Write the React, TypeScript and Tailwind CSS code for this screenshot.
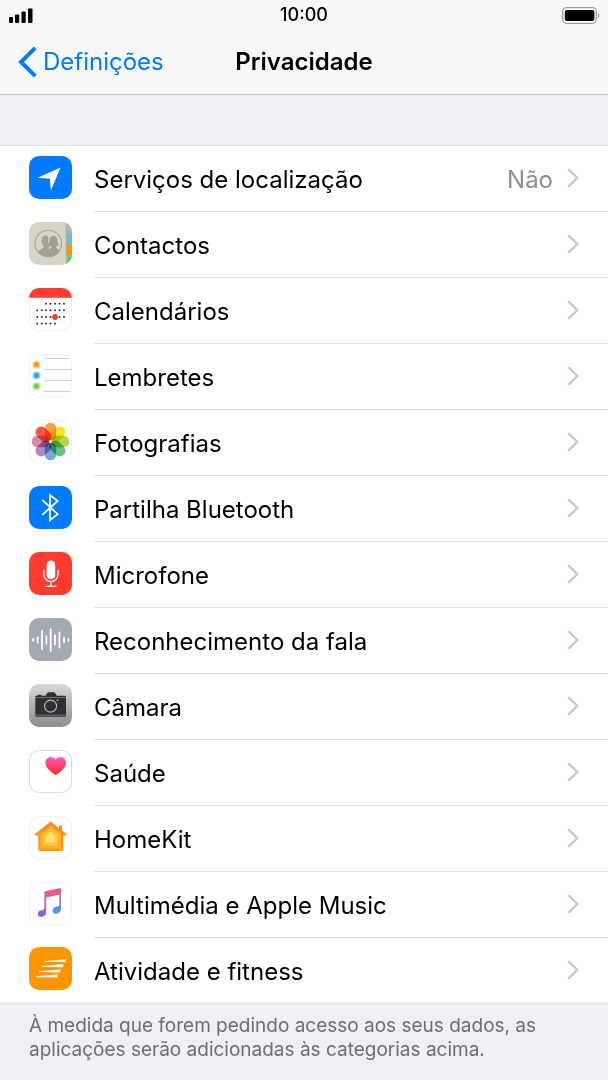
import type { ReactNode } from "react";

interface Setting {
  id: string;
  label: string;
  value?: string;
  icon: ReactNode;
}

interface TileProps {
  className: string;
  children: ReactNode;
}

function Tile({ className, children }: TileProps) {
  return (
    <svg
      viewBox="0 0 43 43"
      aria-hidden="true"
      className={`mb-1 h-[43px] w-[43px] shrink-0 rounded-[10px] ${className}`}
    >
      {children}
    </svg>
  );
}

const outline = "bg-white ring-1 ring-inset ring-[#f0f0f0]";

const calendarRows = [
  { y: 15.7, xs: [17, 21.5, 26, 30.5, 35] },
  { y: 22.3, xs: [8.3, 12.7, 17, 21.5, 26, 30.5, 35] },
  { y: 29, xs: [8.3, 12.7, 17, 21.5, 26, 30.5, 35] },
  { y: 35.6, xs: [8.3, 12.7, 17, 21.5, 26] },
];

const reminderDots = [
  { y: 10.7, color: "#f59a1f" },
  { y: 21.4, color: "#2aa5ea" },
  { y: 32.2, color: "#62d345" },
];

const petals = [
  "#f9a13a",
  "#f3e61c",
  "#b5d655",
  "#6bbf8b",
  "#7ba9dc",
  "#a58cc6",
  "#dc89a8",
  "#f4564a",
];

const waveBars = [
  [4, 20.8, 22.8],
  [8.6, 19.3, 24.6],
  [13, 12.8, 31.2],
  [17.4, 18.2, 25.8],
  [21.7, 11.2, 33],
  [26, 17.2, 26.6],
  [30.4, 14.4, 29.6],
  [35, 19.7, 24.3],
  [39.4, 20.8, 22.8],
];

const settings: Setting[] = [
  {
    id: "localizacao",
    label: "Serviços de localização",
    value: "Não",
    icon: (
      <Tile className="bg-[#007aff]">
        <path d="M31.600 11.500 21.800 34.600 20.900 22.700 8.700 21.800Z" fill="#fff" />
      </Tile>
    ),
  },
  {
    id: "contactos",
    label: "Contactos",
    icon: (
      <Tile className="bg-[#d7d5ca]">
        <path d="M37 0H43V11H37Z" fill="#b7b4ab" />
        <path d="M37.600 11H43V22H37.600Z" fill="#5fc0f0" />
        <path d="M37.600 22H43V33H37.600Z" fill="#ff9500" />
        <path d="M37.600 33H43V43H37.600Z" fill="#53d769" />
        <path d="M37.200 0V43" stroke="#aaa79d" strokeWidth="0.9" />
        <path
          d="M9 30c1-2 4-3 5.500-4.200.4-1 0-2-.9-3.200-1.200-2-2.200-8.200 2.500-9 2-.2 3.200.6 3.700 2-1.200 3-.6 5.600.6 7.200-.5 1.400-.6 2.400 0 3.200L17 34.300C14 34 11 32.500 9 30Z"
          fill="#a8a198"
        />
        <path
          d="M16.500 33.800c.5-4 3.500-6.500 5.800-7.800l-.4-1.800c-1-.2-1.800-.6-2.200-1.200 1.400-1.800-.6-8.500 4.400-9.200 5.200-.3 4 6.800 5.700 9.300-.6.8-1.600 1-2.500 1.200l-.1 1.700c1.400.8 2.700 1.500 3.200 3.200-2.500 4-8.500 6.700-13.900 4.600Z"
          fill="#a49d94"
        />
        <circle cx="19.300" cy="21.500" r="13.300" fill="none" stroke="#a8a198" strokeWidth="1.100" />
      </Tile>
    ),
  },
  {
    id: "calendarios",
    label: "Calendários",
    icon: (
      <Tile className={outline}>
        <path d="M0 0H43V9.700H0Z" fill="#ff3b30" />
        {calendarRows.map((row) =>
          row.xs.map((x) => (
            <rect key={`${row.y}-${x}`} x={x - 0.8} y={row.y - 0.8} width="1.600" height="1.600" fill="#111" />
          ))
        )}
        <circle cx="26" cy="29" r="2.900" fill="#ff3b30" />
      </Tile>
    ),
  },
  {
    id: "lembretes",
    label: "Lembretes",
    icon: (
      <Tile className={outline}>
        <path d="M14.500 4.500H41M14.500 15.500H43M14.500 26.500H43M14.500 37.500H41" stroke="#cfcfd3" />
        {reminderDots.map((dot) => (
          <g key={dot.color}>
            <circle cx="7.400" cy={dot.y} r="3.600" fill="none" stroke={dot.color} strokeWidth="0.900" opacity="0.700" />
            <circle cx="7.400" cy={dot.y} r="2.600" fill={dot.color} />
          </g>
        ))}
      </Tile>
    ),
  },
  {
    id: "fotografias",
    label: "Fotografias",
    icon: (
      <Tile className={outline}>
        {petals.map((color, i) => (
          <rect
            key={color}
            x="15.800"
            y="2.700"
            width="11.400"
            height="17.800"
            rx="5.600"
            fill={color}
            transform={`rotate(${i * 45} 21.5 21.5)`}
            className="mix-blend-multiply"
          />
        ))}
        <circle cx="21.500" cy="21.500" r="1.300" fill="#fff" />
      </Tile>
    ),
  },
  {
    id: "bluetooth",
    label: "Partilha Bluetooth",
    icon: (
      <Tile className="bg-[#007aff]">
        <path
          d="M13.300 14 28.600 28.200 21 34.200V9L28.600 15 13.300 28.800"
          fill="none"
          stroke="#fff"
          strokeWidth="1.800"
        />
      </Tile>
    ),
  },
  {
    id: "microfone",
    label: "Microfone",
    icon: (
      <Tile className="bg-[#ff3b30]">
        <rect x="17.600" y="8.600" width="8.600" height="18.600" rx="4.300" fill="#fff" />
        <path
          d="M14.800 18V22.500a7.100 7.100 0 0 0 14.200 0V18M21.900 29.500V34.200M16.600 34.400H27.400"
          fill="none"
          stroke="#fff"
          strokeWidth="1.400"
        />
      </Tile>
    ),
  },
  {
    id: "fala",
    label: "Reconhecimento da fala",
    icon: (
      <Tile className="bg-[#a2aab4]">
        {waveBars.map(([x, top, bottom]) => (
          <path key={x} d={`M${x} ${top}V${bottom}`} stroke="#fff" strokeWidth="1.800" strokeLinecap="round" />
        ))}
      </Tile>
    ),
  },
  {
    id: "camara",
    label: "Câmara",
    icon: (
      <Tile className="bg-gradient-to-b from-[#dadada] to-[#8b8c91]">
        <path
          d="M7.500 11.700h1.200V10.800H12.500v.9h4L18.300 9c.4-.6.8-.8 1.500-.8h4.800c.7 0 1.100.2 1.500.8l1.800 2.700H35.700c.8 0 1.300.5 1.300 1.300V31.400c0 .8-.5 1.300-1.300 1.300H7.600c-.8 0-1.300-.5-1.300-1.300V13c0-.8.4-1.300 1.200-1.300Z"
          fill="#303032"
        />
        <path d="M6.300 13.600H37M6.300 31.200H37" stroke="#a5a5a7" strokeWidth="0.600" />
        <circle cx="21.600" cy="22.100" r="7.200" fill="#303032" />
        <circle cx="21.600" cy="22.100" r="6" fill="none" stroke="#b9b9bb" strokeWidth="1.100" />
        <circle cx="28.500" cy="16.200" r="0.900" fill="#d8b01e" />
      </Tile>
    ),
  },
  {
    id: "saude",
    label: "Saúde",
    icon: (
      <Tile className="bg-white ring-1 ring-inset ring-[#dcdcde]">
        <defs>
          <linearGradient id="heart" x1="0" y1="0" x2="0" y2="1">
            <stop offset="0" stopColor="#fb5cbb" />
            <stop offset="1" stopColor="#ff2a1f" />
          </linearGradient>
        </defs>
        <path
          d="M26.700 25C23 22.500 16.400 18.400 16.400 12.700 16.400 9.500 18.700 7 21.800 7c2.100 0 3.900 1 4.900 2.700C27.700 8 29.500 7 31.600 7 34.700 7 37 9.500 37 12.700 37 18.400 30.400 22.500 26.700 25Z"
          fill="url(#heart)"
        />
      </Tile>
    ),
  },
  {
    id: "homekit",
    label: "HomeKit",
    icon: (
      <Tile className={outline}>
        <defs>
          <linearGradient id="house" x1="0" y1="0" x2="0" y2="1">
            <stop offset="0" stopColor="#f98a1c" />
            <stop offset="1" stopColor="#ff9d0c" />
          </linearGradient>
        </defs>
        <path
          d="M21.700 5.400 30 12V9.400h3V14.500L38 18.500 37.200 19.500H34.400V33c0 1.300-.8 2-2 2H11.300c-1.200 0-2-.7-2-2V19.500H6.200L5.300 18.500Z"
          fill="url(#house)"
        />
        <path d="M21.700 9.500 32 18V32.600H11.600V18Z" fill="#ffb02a" />
        <path d="M21.700 12.600 29.200 19V29.500H14.400V19Z" fill="#ffc53d" />
        <path d="M21.700 16 26.200 20V26.400H17.300V20Z" fill="#ffe070" />
      </Tile>
    ),
  },
  {
    id: "multimedia",
    label: "Multimédia e Apple Music",
    icon: (
      <Tile className={outline}>
        <defs>
          <linearGradient id="note" gradientUnits="userSpaceOnUse" x1="22" y1="6" x2="18" y2="36">
            <stop offset="0" stopColor="#fa5475" />
            <stop offset="0.450" stopColor="#c860b4" />
            <stop offset="1" stopColor="#7f62f5" />
          </linearGradient>
          <linearGradient id="stem" gradientUnits="userSpaceOnUse" x1="30" y1="6" x2="28" y2="32">
            <stop offset="0" stopColor="#fa5475" />
            <stop offset="0.500" stopColor="#9a72cf" />
            <stop offset="1" stopColor="#36a5f2" />
          </linearGradient>
        </defs>
        <path
          d="M17 9 30.600 6.200V12.600L17.200 15.500V29.800c0 3.400-2 4.800-4.600 5.100-2.200.2-3.800-1-3.800-3 0-2.400 1.700-3.600 4-4 1.800-.4 2.600-.6 2.600-2.200V10.800C15.400 9.700 15.900 9.200 17 9Z"
          fill="url(#note)"
        />
        <path
          d="M30.300 6.200C31.500 6 32 6.200 32 7.400V26.600c0 3.400-2 5-4.600 5.200-2.200.2-3.900-1-3.900-3 0-2.300 1.700-3.600 4-4 1.800-.4 2.800-.6 2.800-2.200Z"
          fill="url(#stem)"
        />
      </Tile>
    ),
  },
  {
    id: "fitness",
    label: "Atividade e fitness",
    icon: (
      <Tile className="bg-[#ff9500]">
        <path
          d="M15.500 13.900 37.200 12.200 36.500 15.100 15.300 14.800ZM13 19 34.500 17.300 33.800 20.300 12.700 19.900ZM10 24.200 31.600 22.500 31 25.500 9.800 25.100ZM7.300 29.300 28.900 27.600 28.200 30.600 7 30.200Z"
          fill="#fff"
        />
      </Tile>
    ),
  },
];

function Chevron() {
  return (
    <svg viewBox="0 0 12 20" aria-hidden="true" className="mb-px h-5 w-3 shrink-0">
      <path d="M1.200 1.200 10.300 10 1.200 18.800" fill="none" stroke="#c7c7cc" strokeWidth="2.400" />
    </svg>
  );
}

function StatusBar() {
  return (
    <div className="grid h-[30px] grid-cols-3 items-center px-2">
      <svg viewBox="0 0 25 15" aria-hidden="true" className="h-[15px] w-[25px]">
        <rect x="1" y="9" width="4" height="6" rx="1" />
        <rect x="7" y="6.500" width="4.200" height="8.500" rx="1" />
        <rect x="13.500" y="3.500" width="4.200" height="11.500" rx="1" />
        <rect x="20" y="0.500" width="4.500" height="14.500" rx="1" />
      </svg>
      <span className="text-center text-[18px] leading-5 font-medium">10:00</span>
      <svg viewBox="0 0 39 17" aria-hidden="true" className="h-[17px] w-[39px] justify-self-end">
        <rect x="1.700" y="0.700" width="33.600" height="15.600" rx="4" fill="#fff" stroke="#9b9b9b" strokeWidth="1.300" />
        <rect x="3.800" y="2.900" width="29.600" height="11.200" rx="2" />
        <path d="M37 6.200c1.700.7 1.700 4 0 4.700Z" fill="#8a8a8a" />
      </svg>
    </div>
  );
}

export default function App() {
  return (
    <div className="min-h-screen bg-[#efeff4] font-['Inter',sans-serif] text-black">
      <header className="border-b border-[#c8c7cc] bg-[#f8f8f8]">
        <StatusBar />
        <div className="grid h-16 grid-cols-[1fr_auto_1fr] items-center px-[18px]">
          <button type="button" className="flex items-center gap-1.5 justify-self-start text-[#007aff]">
            <svg viewBox="0 0 19 32" aria-hidden="true" className="h-8 w-[19px]">
              <path d="M17.300 1.800 3 16 17.300 30.200" fill="none" stroke="currentColor" strokeWidth="4" />
            </svg>
            <span className="text-2xl">Definições</span>
          </button>
          <h1 className="text-2xl font-semibold">Privacidade</h1>
        </div>
      </header>

      <main className="pt-[50px]">
        <ul className="border-y border-[#dcdbe0] bg-white">
          {settings.map((item) => (
            <li key={item.id} className="group">
              <a
                href={`#${item.id}`}
                className="flex h-[66px] items-center gap-[22px] pl-[29px] group-last:h-[65px]"
              >
                {item.icon}
                <span className="flex h-full min-w-0 flex-1 items-center border-b border-[#e0e0e3] pr-[29px] group-last:border-b-0">
                  <span className="flex-1 truncate pt-0.5 text-2xl">{item.label}</span>
                  {item.value && <span className="mr-[14px] pt-0.5 text-2xl text-[#8e8e93]">{item.value}</span>}
                  <Chevron />
                </span>
              </a>
            </li>
          ))}
        </ul>
        <p className="px-[29px] pt-[10px] pb-[18px] text-[19px] leading-6 text-[#6d6d72]">
          À medida que forem pedindo acesso aos seus dados, as aplicações serão adicionadas às categorias acima.
        </p>
      </main>
    </div>
  );
}
